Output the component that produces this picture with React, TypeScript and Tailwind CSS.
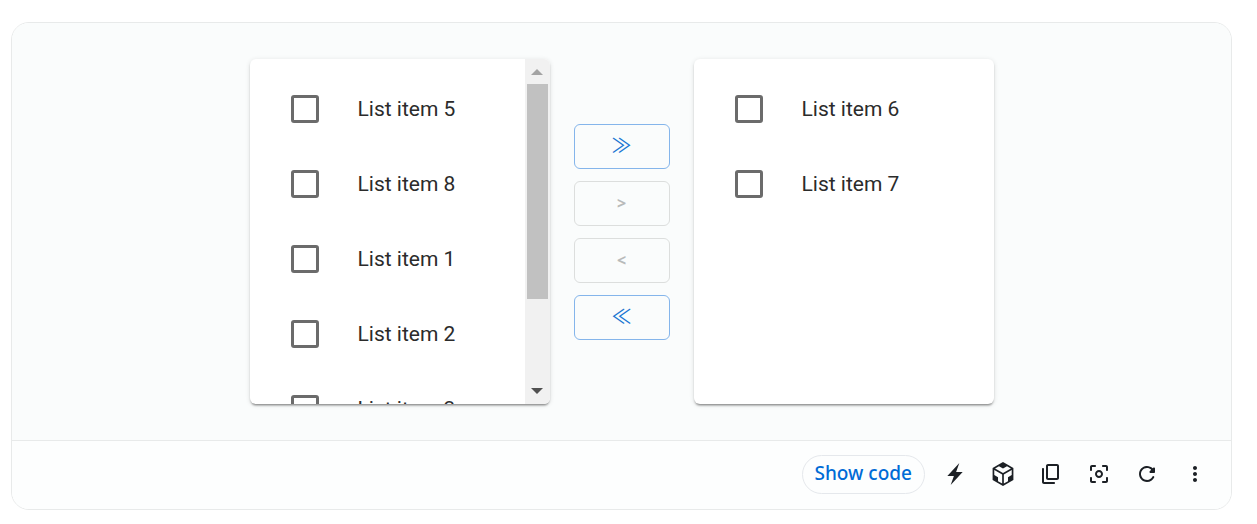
import { useState } from 'react';
import type { ReactNode } from 'react';

const LEFT = [5, 8, 1, 2, 3, 4];
const RIGHT = [6, 7];

function Rows({ items }: { items: number[] }) {
  const [checked, setChecked] = useState<number[]>([]);
  const toggle = (n: number) =>
    setChecked((c) => (c.includes(n) ? c.filter((x) => x !== n) : [...c, n]));
  return (
    <ul className="min-w-0 flex-1 overflow-y-auto py-3 [scrollbar-width:none]">
      {items.map((n) => (
        <li key={n}>
          <label className="flex h-[75px] cursor-pointer items-center gap-[39px] pl-[41px] text-[21px] leading-8 text-[#2b2b2b]">
            <input
              type="checkbox"
              checked={checked.includes(n)}
              onChange={() => toggle(n)}
              className="size-7 shrink-0 appearance-none rounded-[3px] border-3 border-[#6b6b6b] checked:bg-[#1976d2]"
            />
            <span>List item {n}</span>
          </label>
        </li>
      ))}
    </ul>
  );
}

function Paper({ children }: { children: ReactNode }) {
  return (
    <section className="flex h-[345px] w-[300px] overflow-hidden rounded-md bg-white shadow-[0_3px_2px_-2px_rgba(0,0,0,0.3),0_2px_2px_rgba(0,0,0,0.14),0_1px_5px_rgba(0,0,0,0.12)]">
      {children}
    </section>
  );
}

function ScrollRail() {
  return (
    <div aria-hidden="true" className="flex w-[25px] flex-col items-center bg-[#f1f1f1]">
      <div className="flex h-[25px] items-center">
        <svg width="12" height="6" viewBox="0 0 12 6" fill="#a3a3a3"><path d="M6 0l6 6H0z" /></svg>
      </div>
      <div className="h-[215px] w-[21px] bg-[#c1c1c1]" />
      <div className="mt-auto flex h-[26px] items-center">
        <svg width="12" height="6" viewBox="0 0 12 6" fill="#505050"><path d="M0 0h12L6 6z" /></svg>
      </div>
    </div>
  );
}

function MoveButton({ label, disabled, children }: { label: string; disabled?: boolean; children: ReactNode }) {
  return (
    <button
      type="button"
      aria-label={label}
      disabled={disabled}
      className="flex h-[45px] w-24 items-center justify-center rounded-md border border-[#84b5eb] pb-0.5 font-['Noto_Sans_CJK_JP',sans-serif] text-xl font-normal text-[#1976d2] disabled:border-[#dcdedd] disabled:pb-0 disabled:font-['Open_Sans',sans-serif] disabled:text-base disabled:font-bold disabled:text-[#b8baba]"
    >
      {children}
    </button>
  );
}

const TOOLS = [
  {
    label: 'Edit in StackBlitz',
    size: 22,
    viewBox: '0 0 24 24',
    d: 'M10.797 14.182H3.635L16.728 0l-3.525 9.818h7.162L7.272 24l3.524-9.818Z',
  },
  {
    label: 'Edit in CodeSandbox',
    size: 24,
    viewBox: '96 96 832 832',
    d: 'M709.6 210l.4-.2h.2L512 96 313.9 209.8h-.2l.7.3L151.5 304v416L512 928l360.5-208V304l-162.9-94zM482.7 843.6L339.6 761V621.4L210 547.8V372.9l272.7 157.3v313.4zM238.2 321.5l134.7-77.8 138.9 79.7 139.1-79.9 135.2 78-273.9 158-274-158zM814 548.3l-128.8 73.1v139.1l-143.9 83V530.4L814 373.1v175.2z',
  },
  {
    label: 'Copy the source',
    size: 24,
    viewBox: '0 0 24 24',
    d: 'M15 20H5V7c0-.55-.45-1-1-1s-1 .45-1 1v13c0 1.1.9 2 2 2h10c.55 0 1-.45 1-1s-.45-1-1-1zm5-4V4c0-1.1-.9-2-2-2H9c-1.1 0-2 .9-2 2v12c0 1.1.9 2 2 2h9c1.1 0 2-.9 2-2zm-2 0H9V4h9v12z',
  },
  {
    label: 'Reset focus',
    size: 24,
    viewBox: '0 0 24 24',
    d: 'M4 15c-.55 0-1 .45-1 1v3c0 1.1.9 2 2 2h3c.55 0 1-.45 1-1s-.45-1-1-1H5v-3c0-.55-.45-1-1-1zm1-10h3c.55 0 1-.45 1-1s-.45-1-1-1H5c-1.1 0-2 .9-2 2v3c0 .55.45 1 1 1s1-.45 1-1V5zm14-2h-3c-.55 0-1 .45-1 1s.45 1 1 1h3v3c0 .55.45 1 1 1s1-.45 1-1V5c0-1.1-.9-2-2-2zm0 16h-3c-.55 0-1 .45-1 1s.45 1 1 1h3c1.1 0 2-.9 2-2v-3c0-.55-.45-1-1-1s-1 .45-1 1v3zM12 8c-2.21 0-4 1.79-4 4s1.79 4 4 4 4-1.79 4-4-1.79-4-4-4zm0 6c-1.1 0-2-.9-2-2s.9-2 2-2 2 .9 2 2-.9 2-2 2z',
  },
  {
    label: 'Reset demo',
    size: 24,
    viewBox: '0 0 24 24',
    d: 'M17.65 6.35c-1.63-1.63-3.94-2.57-6.48-2.31-3.67.37-6.69 3.35-7.1 7.02C3.52 15.91 7.27 20 12 20c3.19 0 5.93-1.87 7.21-4.56.32-.67-.16-1.44-.9-1.44-.37 0-.72.2-.88.53-1.13 2.43-3.84 3.97-6.8 3.31-2.22-.49-4.01-2.3-4.48-4.52C5.31 9.44 8.26 6 12 6c1.66 0 3.14.69 4.22 1.78l-1.51 1.51c-.63.63-.19 1.71.7 1.71H19c.55 0 1-.45 1-1V6.41c0-.89-1.08-1.34-1.71-.71l-.64.65z',
  },
  {
    label: 'See more',
    size: 24,
    viewBox: '0 0 24 24',
    d: 'M12 8c1.1 0 2-.9 2-2s-.9-2-2-2-2 .9-2 2 .9 2 2 2zm0 2c-1.1 0-2 .9-2 2s.9 2 2 2 2-.9 2-2-.9-2-2-2zm0 6c-1.1 0-2 .9-2 2s.9 2 2 2 2-.9 2-2-.9-2-2-2z',
  },
];

export default function App() {
  return (
    <main className="bg-white pt-[22px] pr-[25px] pb-3 pl-[11px] font-[Roboto,sans-serif]">
      <div className="overflow-hidden rounded-[18px] border border-[#e8eaea]">
        <div className="flex items-center justify-center gap-6 bg-[#fafcfc] py-9">
          <Paper>
            <Rows items={LEFT} />
            <ScrollRail />
          </Paper>
          <div className="flex flex-col gap-3">
            <MoveButton label="move all right">≫</MoveButton>
            <MoveButton label="move selected right" disabled>&gt;</MoveButton>
            <MoveButton label="move selected left" disabled>&lt;</MoveButton>
            <MoveButton label="move all left">≪</MoveButton>
          </div>
          <Paper>
            <Rows items={RIGHT} />
          </Paper>
        </div>
        <div className="flex h-[69px] items-center justify-end gap-3 border-t border-[#e8eaea] bg-[#fdfefe] pr-[18px] pb-0.5">
          <button
            type="button"
            className="h-[39px] rounded-full border border-[#e5e8ec] px-3 pb-0.5 font-['Noto_Sans',sans-serif] text-[19px] leading-7 font-medium text-[#006bd6]"
          >
            Show code
          </button>
          {TOOLS.map((t) => (
            <button key={t.label} type="button" aria-label={t.label} className="flex size-9 items-center justify-center text-[#1c2025]">
              <svg width={t.size} height={t.size} viewBox={t.viewBox} fill="currentColor"><path d={t.d} /></svg>
            </button>
          ))}
        </div>
      </div>
    </main>
  );
}
